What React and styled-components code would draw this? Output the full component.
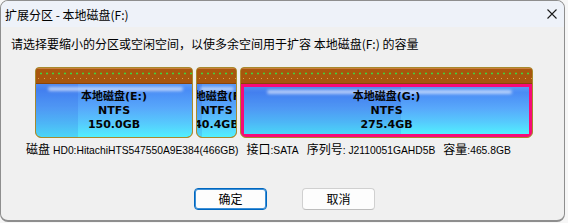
import React from "react";
import styled, { createGlobalStyle, css } from "styled-components";

const GlobalStyle = createGlobalStyle`
  html, body { margin: 0; padding: 0; background: #f6f6f6; }
  body { font-family: "Noto Sans CJK SC", "Liberation Sans", sans-serif; color: #000; }
`;

const Window = styled.div`
  box-sizing: border-box;
  width: 565px;
  height: 222px;
  margin-top: 0;
  border: 1px solid #8e8e8e;
  border-bottom-width: 2px;
  border-radius: 8px;
  overflow: hidden;
  background: #f0f0f0;
  display: flex;
  flex-direction: column;
`;

const TitleBar = styled.div`
  height: 26px;
  flex: none;
  background: #eef2f9;
  display: flex;
  align-items: center;
  padding-left: 4px;
  font-size: 12px;
  line-height: 16px;
`;

const Title = styled.div`
  flex: 1;
  padding-top: 1px;
`;

const CloseButton = styled.div`
  width: 22px;
  height: 26px;
  display: flex;
  align-items: center;
  justify-content: center;
  margin-right: 1px;
`;

const Instruction = styled.div`
  margin: 9px 0 0 10px;
  font-size: 12px;
  line-height: 16px;
  white-space: nowrap;
`;

const DiskMap = styled.div`
  display: flex;
  gap: 3px;
  margin: 15px 0 0 34px;
  height: 71px;
`;

const Partition = styled.div`
  box-sizing: border-box;
  width: ${(p) => p.$w}px;
  height: 100%;
  border: 1px solid #a88a2c;
  border-radius: 4px 4px 6px 6px;
  overflow: hidden;
  display: flex;
  flex-direction: column;
  background: #a88a2c;
`;

const Hatch = styled.div`
  height: 16px;
  flex: none;
  box-sizing: border-box;
  border-top: 1px solid #c97f3e;
  border-bottom: 1px solid #8a4408;
  background-color: #a8560d;
  background-image:
    radial-gradient(circle at 3px 4.5px, #3fd43f 0 0.9px, transparent 1.2px),
    radial-gradient(circle at 0px 9.5px, #d9a14a 0 0.8px, transparent 1.1px);
  background-size: 6px 100%, 6px 100%;
  background-repeat: repeat-x;
  background-position: 2px 0, 2px 0;
`;

const Body = styled.div`
  position: relative;
  flex: 1;
  box-sizing: border-box;
  overflow: hidden;
  display: flex;
  flex-direction: column;
  align-items: center;
  justify-content: center;
  border-radius: 0 0 5px 5px;
  background: linear-gradient(
    to bottom,
    #5a98f6 0%,
    #4a8cf5 12%,
    #58a8fb 45%,
    #56cbfd 75%,
    #52effe 100%
  );
  ${(p) =>
    p.$selected &&
    css`
      border: 3px solid #f70a78;
      border-radius: 0 0 3px 3px;
    `}

  &::before {
    content: "";
    position: absolute;
    left: 0;
    top: 0;
    bottom: 0;
    width: ${(p) => p.$used}%;
    background: rgba(20, 50, 200, 0.13);
  }

  &::after {
    content: "";
    position: absolute;
    left: 8%;
    right: 6%;
    top: 3px;
    height: 4px;
    border-radius: 3px;
    background: rgba(255, 255, 255, 0.6);
    filter: blur(1.5px);
  }
`;

const BarText = styled.div`
  position: relative;
  z-index: 1;
  font-family: "DejaVu Sans", "Noto Sans CJK SC", sans-serif;
  font-weight: bold;
  font-size: 11px;
  line-height: 14px;
  white-space: nowrap;
  color: #050505;
`;

const InfoRow = styled.div`
  display: flex;
  align-items: baseline;
  gap: 8px;
  margin: 4px 0 0 25px;
  height: 14px;
  line-height: 14px;
  white-space: nowrap;
`;

const Field = styled.span`
  display: inline-flex;
  align-items: baseline;
`;

const FieldLabel = styled.span`
  font-family: "Noto Sans CJK SC", sans-serif;
  font-size: 12px;
  margin-right: ${(p) => p.$gap || 0}px;
`;

const FieldValue = styled.span`
  font-family: "Liberation Sans", Arial, sans-serif;
  font-size: 10.3px;
`;

const ButtonRow = styled.div`
  display: flex;
  gap: 35px;
  margin: 32px 0 0 193px;
`;

const Button = styled.button`
  box-sizing: border-box;
  width: 73px;
  height: 22px;
  padding: 0;
  font-family: "Noto Sans CJK SC", sans-serif;
  font-size: 12px;
  line-height: 16px;
  color: #000;
  background: #fdfdfd;
  border-radius: 4px;
  border: 1px solid ${(p) => (p.$primary ? "#0067c0" : "#d0d0d0")};
  border-bottom-color: ${(p) => (p.$primary ? "#0067c0" : "#bdbdbd")};
  box-shadow: ${(p) => (p.$primary ? "inset 0 0 0 1px #3c8fd6" : "none")};
`;

const partitions = [
  { w: 158, used: 27, name: "本地磁盘(E:)", size: "150.0GB" },
  { w: 41, used: 12, name: "本地磁盘(F:)", size: "40.4GB" },
  { w: 293, used: 55, name: "本地磁盘(G:)", size: "275.4GB", selected: true },
];

function CloseIcon() {
  return (
    <svg width="10" height="10" viewBox="0 0 10 10">
      <path d="M0.5 0.5 L9.5 9.5 M9.5 0.5 L0.5 9.5" stroke="#1b1b1b" strokeWidth="1.1" fill="none" />
    </svg>
  );
}

export default function App() {
  return (
    <>
      <GlobalStyle />
      <Window>
        <TitleBar>
          <Title>扩展分区 - 本地磁盘(F:)</Title>
          <CloseButton>
            <CloseIcon />
          </CloseButton>
        </TitleBar>
        <Instruction>
          请选择要缩小的分区或空闲空间，以使多余空间用于扩容 本地磁盘(F:) 的容量
        </Instruction>
        <DiskMap>
          {partitions.map((p) => (
            <Partition key={p.name} $w={p.w}>
              <Hatch />
              <Body $used={p.used} $selected={p.selected}>
                <BarText>{p.name}</BarText>
                <BarText>NTFS</BarText>
                <BarText>{p.size}</BarText>
              </Body>
            </Partition>
          ))}
        </DiskMap>
        <InfoRow>
          <Field>
            <FieldLabel $gap={3}>磁盘</FieldLabel>
            <FieldValue>HD0:HitachiHTS547550A9E384(466GB)</FieldValue>
          </Field>
          <Field>
            <FieldLabel>接口</FieldLabel>
            <FieldValue>:SATA</FieldValue>
          </Field>
          <Field>
            <FieldLabel>序列号</FieldLabel>
            <FieldValue>: J2110051GAHD5B</FieldValue>
          </Field>
          <Field>
            <FieldLabel>容量</FieldLabel>
            <FieldValue>:465.8GB</FieldValue>
          </Field>
        </InfoRow>
        <ButtonRow>
          <Button $primary>确定</Button>
          <Button>取消</Button>
        </ButtonRow>
      </Window>
    </>
  );
}
